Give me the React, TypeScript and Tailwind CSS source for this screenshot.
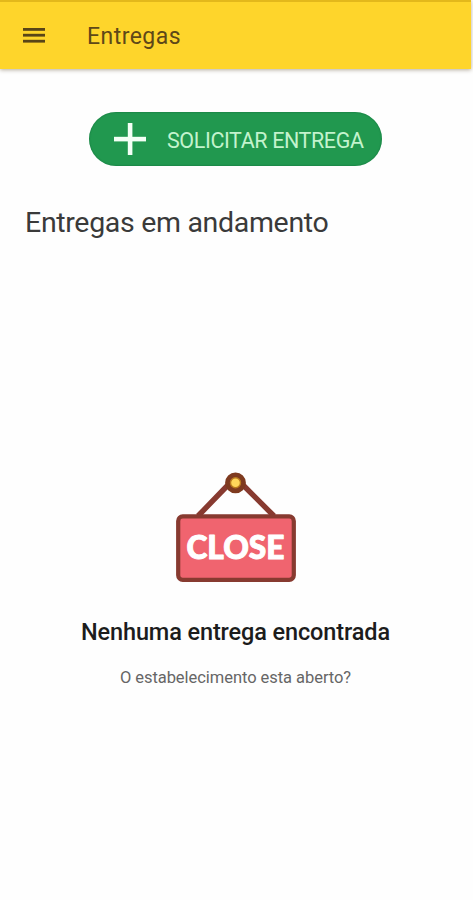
import React from 'react';

const MenuIcon: React.FC = () => (
  <svg width="22" height="16" viewBox="0 0 22 16" fill="#594517">
    <rect x="0" y="0" width="22" height="2.8" />
    <rect x="0" y="5.8" width="22" height="2.8" />
    <rect x="0" y="11.8" width="22" height="2.8" />
  </svg>
);

const PlusIcon: React.FC = () => (
  <svg width="32" height="32" viewBox="0 0 32 32" fill="#f4fff6">
    <rect x="13.8" y="0" width="4.6" height="32" />
    <rect x="0" y="13.8" width="32" height="4.6" />
  </svg>
);

const CloseSign: React.FC = () => (
  <svg width="120" height="110" viewBox="0 0 120 110">
    <path d="M22 44 L52 13 M67 13 L98 44" stroke="#873a30" strokeWidth="5.4" fill="none" />
    <circle cx="59.5" cy="10.8" r="7.6" fill="#ffd65a" stroke="#7e3a1f" strokeWidth="5.6" />
    <circle cx="59.5" cy="10.8" r="5" fill="#ffd65a" stroke="#b9791d" strokeWidth="1.4" />
    <rect x="2.2" y="44.4" width="115.6" height="63.4" rx="4.5" fill="#f0646f" stroke="#873a30" strokeWidth="4.2" />
    <text
      x="10.5"
      y="87"
      textLength="98"
      lengthAdjust="spacingAndGlyphs"
      fill="#ffffff"
      stroke="#ffffff"
      strokeWidth="1"
      strokeLinejoin="round"
      className="font-['Lato',sans-serif] text-[31.5px] font-black"
    >
      CLOSE
    </text>
  </svg>
);

export default function App() {
  return (
    <div className="flex h-[900px] w-[473px] flex-col overflow-hidden bg-[#fefefe] font-['Roboto',sans-serif]">
      <header className="flex h-[69px] w-[471px] shrink-0 items-center border-t-2 border-[#e3b81b] bg-[#fed52b] pl-[23px] shadow-[0_1px_4px_rgba(90,70,40,0.45)]">
        <MenuIcon />
        <h1 className="ml-[42px] pt-[3px] text-[23px] leading-7 tracking-[0.45px] text-[#5e4818]">Entregas</h1>
      </header>

      <main className="flex flex-1 flex-col">
        <button className="ml-[89px] mt-[43px] flex h-[54px] w-[293px] items-center rounded-full bg-[#21984f] pl-[25px] shadow-[inset_0_0_1px_1px_rgba(20,110,60,0.35)]">
          <PlusIcon />
          <span className="ml-[21px] whitespace-nowrap pt-[3px] text-[21.5px] leading-7 tracking-[-0.4px] text-[#c3f3cd]">
            SOLICITAR ENTREGA
          </span>
        </button>

        <h2 className="ml-[25px] mt-[39px] whitespace-nowrap text-[28.5px] leading-9 tracking-[-0.32px] text-[#3a3a3a]">
          Entregas em andamento
        </h2>

        <section className="mt-[231px] flex w-[471px] flex-col items-center">
          <CloseSign />
          <p className="mt-[34px] whitespace-nowrap text-[23.5px] font-medium leading-8 tracking-[-0.12px] text-[#1c1c1c]">
            Nenhuma entrega encontrada
          </p>
          <p className="mt-[18px] whitespace-nowrap text-[16.5px] leading-6 tracking-[-0.05px] text-[#666666]">
            O estabelecimento esta aberto?
          </p>
        </section>
      </main>
    </div>
  );
}
